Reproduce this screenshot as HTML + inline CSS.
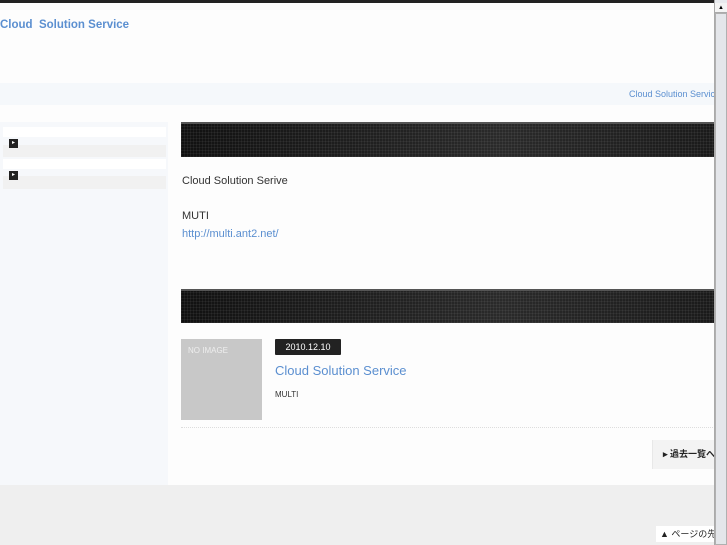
<!DOCTYPE html>
<html><head><meta charset="utf-8"><style>
*{margin:0;padding:0;box-sizing:border-box}
body{width:727px;height:545px;overflow:hidden;background:#fdfdfd;font-family:"Liberation Sans","Noto Sans CJK JP",sans-serif;position:relative}
.a{position:absolute}
.bar{background:repeating-linear-gradient(90deg,rgba(255,255,255,.05) 0 1px,transparent 1px 3px),repeating-linear-gradient(0deg,rgba(255,255,255,.05) 0 1px,transparent 1px 3px),linear-gradient(90deg,#111,#2a2a2a 60%,#1a1a1a);border-top:2px solid #555;}
</style></head><body>
<div class="a" style="left:0;top:0;width:727px;height:3px;background:#222"></div>
<div class="a" style="left:0;top:19px;font-size:11.5px;font-weight:bold;color:#5b8fd0">Cloud&nbsp; Solution Service</div>
<div class="a" style="left:0;top:83px;width:715px;height:22px;background:#f5f8fb"></div>
<div class="a" style="left:629px;top:89px;font-size:9px;color:#5b8fd0">Cloud Solution Service</div>
<div class="a" style="left:0;top:122px;width:168px;height:363px;background:#f6f8fb"></div>
<div class="a" style="left:3px;top:127px;width:163px;height:10px;background:#fff"></div>
<div class="a" style="left:3px;top:145px;width:163px;height:12px;background:#f1f1f1"></div>
<div class="a" style="left:3px;top:159px;width:163px;height:10px;background:#fff"></div>
<div class="a" style="left:3px;top:176px;width:163px;height:13px;background:#f1f1f1"></div>
<div class="a" style="left:9px;top:139px;width:9px;height:9px;background:#222;color:#fff;font-size:6px;line-height:9px;text-align:center">▸</div>
<div class="a" style="left:9px;top:171px;width:9px;height:9px;background:#222;color:#fff;font-size:6px;line-height:9px;text-align:center">▸</div>
<div class="a bar" style="left:181px;top:122px;width:534px;height:35px"></div>
<div class="a" style="left:182px;top:175px;font-size:11px;color:#333">Cloud Solution Serive</div>
<div class="a" style="left:182px;top:210px;font-size:11px;color:#333">MUTI</div>
<div class="a" style="left:182px;top:228px;font-size:11px;color:#5b8fd0">http://multi.ant2.net/</div>
<div class="a bar" style="left:181px;top:289px;width:534px;height:34px"></div>
<div class="a" style="left:181px;top:339px;width:81px;height:81px;background:#c8c8c8;color:#eee;font-size:8px;padding:7px 0 0 7px">NO IMAGE</div>
<div class="a" style="left:275px;top:339px;width:66px;height:16px;background:#222;color:#fff;font-size:9px;text-align:center;line-height:16px;border-radius:1px">2010.12.10</div>
<div class="a" style="left:275px;top:363px;font-size:13px;color:#5b8fd0">Cloud Solution Service</div>
<div class="a" style="left:275px;top:390px;font-size:8px;color:#333">MULTI</div>
<div class="a" style="left:181px;top:427px;width:534px;border-top:1px dotted #ddd"></div>
<div class="a" style="left:652px;top:440px;width:63px;height:29px;background:#f3f3f3;border-left:1px solid #e8e8e8;font-size:9px;font-weight:bold;color:#222;line-height:29px;padding-left:10px;white-space:nowrap;overflow:hidden">▸ 過去一覧へ</div>
<div class="a" style="left:0;top:485px;width:715px;height:60px;background:#efefef"></div>
<div class="a" style="left:656px;top:526px;width:59px;height:16px;background:#fff;font-size:9px;color:#222;line-height:16px;padding-left:4px;white-space:nowrap;overflow:hidden">▲ ページの先頭</div>
<div class="a" style="left:714px;top:0;width:13px;height:545px;background:#e8eaee;border-left:1px solid #aaa"></div>
<div class="a" style="left:715px;top:3px;width:12px;height:10px;background:#f4f4f4;font-size:6px;text-align:center;line-height:10px;border-bottom:1px solid #aaa">▲</div>
<div class="a" style="left:715px;top:13px;width:12px;height:532px;background:#e4e6ea;border:1px solid #b0b0b0"></div>
</body></html>
